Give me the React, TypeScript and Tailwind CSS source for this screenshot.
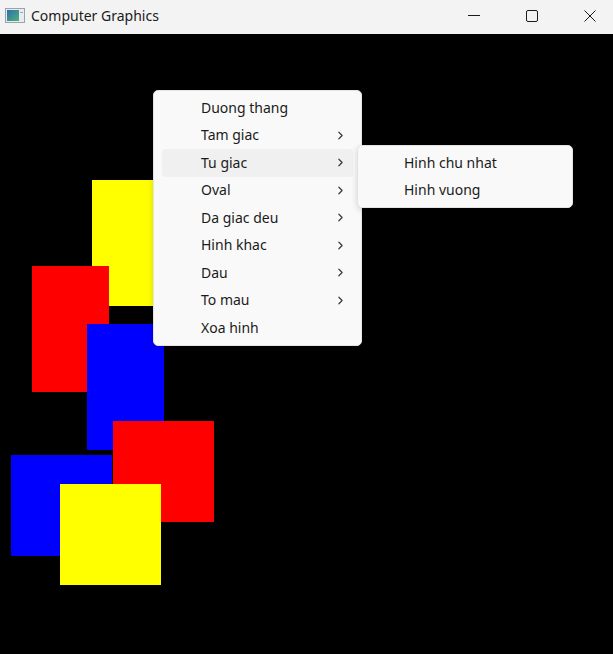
import { ChevronRight } from 'lucide-react'

const mainItems = [
  { label: 'Duong thang', sub: false },
  { label: 'Tam giac', sub: true },
  { label: 'Tu giac', sub: true, active: true },
  { label: 'Oval', sub: true },
  { label: 'Da giac deu', sub: true },
  { label: 'Hinh khac', sub: true },
  { label: 'Dau', sub: true },
  { label: 'To mau', sub: true },
  { label: 'Xoa hinh', sub: false },
]

const subItems = ['Hinh chu nhat', 'Hinh vuong']

function AppIcon() {
  return (
    <svg width="20" height="15" viewBox="0 0 20 15">
      <defs>
        <linearGradient id="ic" x1="0" y1="0" x2="1" y2="1">
          <stop offset="0" stopColor="#2f6fb0" />
          <stop offset="1" stopColor="#4fb07a" />
        </linearGradient>
      </defs>
      <rect x="0.5" y="0.5" width="19" height="14" fill="#e8ecef" stroke="#9aa3aa" />
      <rect x="2" y="2" width="12" height="11" fill="url(#ic)" />
      <rect x="15" y="4" width="3" height="1" fill="#7fb8a0" />
    </svg>
  )
}

function TitleBar() {
  return (
    <div className="h-[34px] bg-[#f3f3f3] flex items-center">
      <div className="ml-[5px] flex items-center mb-[3px]">
        <AppIcon />
      </div>
      <span className="ml-[6px] text-[14px] text-[#1a1a1a] leading-none mb-[3px]">
        Computer Graphics
      </span>
      <div className="ml-auto mr-[17px] flex items-center gap-[46px] mb-[3px]">
        <div className="w-[12px] h-[12px] flex items-center">
          <div className="w-[12px] h-px bg-[#1a1a1a]" />
        </div>
        <div className="w-[12px] h-[12px] border border-[#1a1a1a] rounded-[2px]" />
        <svg width="12" height="12" viewBox="0 0 12 12">
          <path d="M0.5 0.5 L11.5 11.5 M11.5 0.5 L0.5 11.5" stroke="#1a1a1a" strokeWidth="1" />
        </svg>
      </div>
    </div>
  )
}

function MenuRow({ label, sub, active }: { label: string; sub?: boolean; active?: boolean }) {
  return (
    <div
      className={`mx-[8px] h-[27.5px] rounded-[4px] flex items-center pl-[39px] pr-[6px] ${
        active ? 'bg-[#f0f0f0]' : ''
      }`}
    >
      <span className="text-[14px] text-[#1b1b1b] leading-none">{label}</span>
      {sub && <ChevronRight className="ml-auto text-[#3a3a3a]" size={13} strokeWidth={2.2} />}
    </div>
  )
}

export default function App() {
  return (
    <div className="w-[613px] h-[654px] flex flex-col bg-black font-['Noto_Sans',sans-serif]">
      <TitleBar />
      <div className="relative flex-1 bg-black overflow-hidden">
        <div className="absolute left-[92px] top-[146px] w-[77px] h-[126px] bg-[#ffff00]" />
        <div className="absolute left-[32px] top-[232px] w-[77px] h-[126px] bg-[#ff0000]" />
        <div className="absolute left-[87px] top-[290px] w-[77px] h-[126px] bg-[#0000ff]" />
        <div className="absolute left-[11px] top-[421px] w-[101px] h-[101px] bg-[#0000ff]" />
        <div className="absolute left-[113px] top-[387px] w-[101px] h-[101px] bg-[#ff0000]" />
        <div className="absolute left-[60px] top-[450px] w-[101px] h-[101px] bg-[#ffff00]" />

        <div className="absolute left-[153px] top-[56px] w-[209px] py-[3px] bg-[#f9f9f9] border border-[#e3e3e3] rounded-[5px] shadow-[0_2px_6px_rgba(0,0,0,0.15)]">
          {mainItems.map(it => (
            <MenuRow key={it.label} label={it.label} sub={it.sub} active={it.active} />
          ))}
        </div>

        <div className="absolute left-[357px] top-[111px] w-[216px] py-[3px] bg-[#f9f9f9] border border-[#e3e3e3] rounded-[5px] shadow-[0_2px_6px_rgba(0,0,0,0.15)]">
          {subItems.map(s => (
            <div key={s} className="mx-[8px] h-[27.5px] flex items-center pl-[38px]">
              <span className="text-[14px] text-[#1b1b1b] leading-none">{s}</span>
            </div>
          ))}
        </div>
      </div>
    </div>
  )
}
